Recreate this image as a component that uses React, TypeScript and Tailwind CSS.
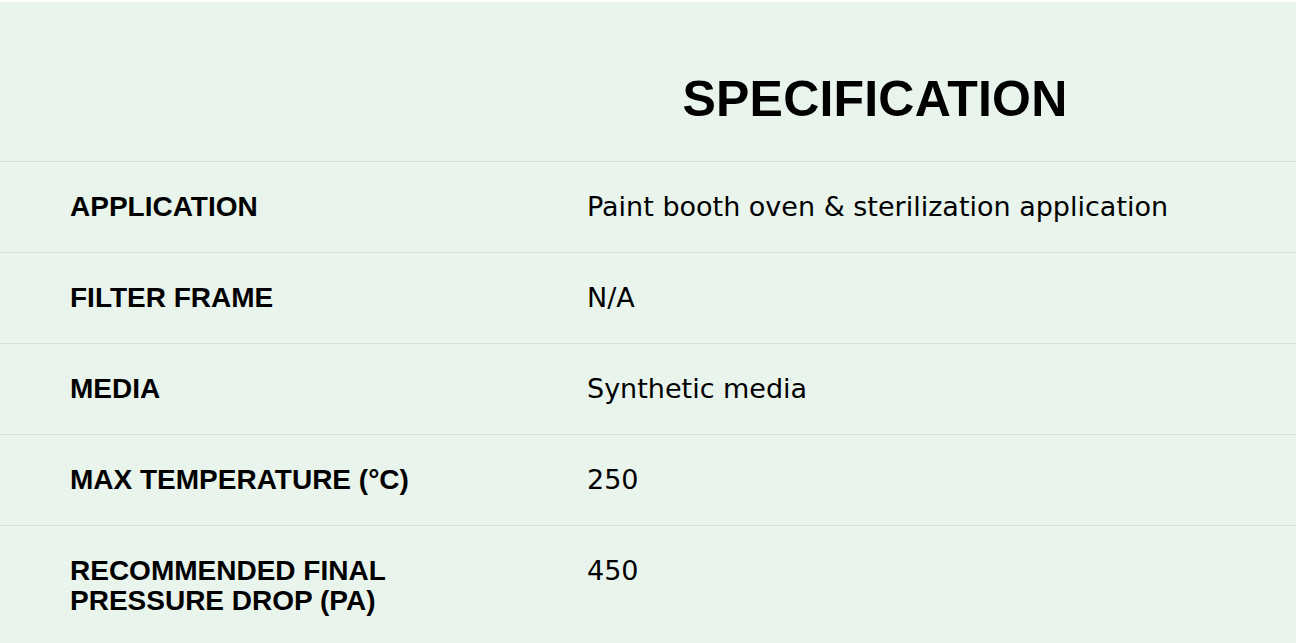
const specs = [
  { label: 'APPLICATION', value: 'Paint booth oven & sterilization application' },
  { label: 'FILTER FRAME', value: 'N/A' },
  { label: 'MEDIA', value: 'Synthetic media' },
  { label: 'MAX TEMPERATURE (°C)', value: '250' },
  { label: 'RECOMMENDED FINAL PRESSURE DROP (PA)', value: '450' },
];

export default function App() {
  return (
    <div className="min-h-screen bg-white pt-[2px]">
      <div className="bg-[#e9f4ec] text-black">
        {/* heading */}
        <div className="grid grid-cols-[517px_1fr] px-[70px] pt-[72px] pb-[37px]">
          <div />
          <h2
            className="pr-[63px] text-center text-[50px] leading-[50px] font-bold tracking-[0.2px]"
            style={{ fontFamily: '"Liberation Sans", Arial, sans-serif' }}
          >
            SPECIFICATION
          </h2>
        </div>

        {specs.map((row) => (
          <div
            key={row.label}
            className="grid grid-cols-[517px_1fr] border-t border-[#d6dfd9] px-[70px] pt-[30px] pb-[30px]"
          >
            <div
              className="max-w-[340px] text-[28px] leading-[30px] font-bold"
              style={{ fontFamily: '"Liberation Sans", Arial, sans-serif' }}
            >
              {row.label}
            </div>
            <div
              className="text-[27px] leading-[30px]"
              style={{ fontFamily: '"DejaVu Sans", sans-serif' }}
            >
              {row.value}
            </div>
          </div>
        ))}
      </div>
    </div>
  );
}
